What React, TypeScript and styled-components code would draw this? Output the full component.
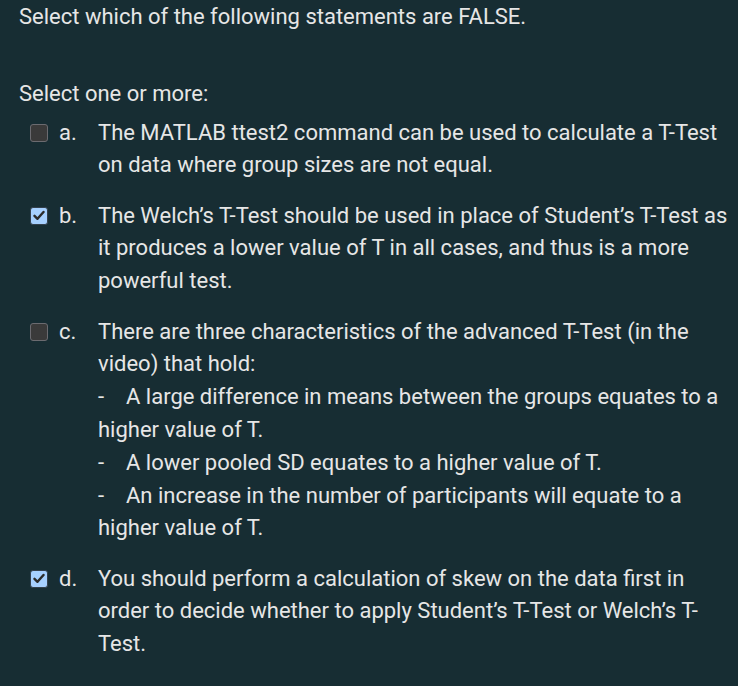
import styled, { createGlobalStyle } from "styled-components";

const GlobalStyle = createGlobalStyle`
  html, body {
    margin: 0;
    padding: 0;
    background: #172d33;
  }
  body {
    font-family: Roboto, "Liberation Sans", sans-serif;
    color: #e6e6e6;
  }
`;

const Page = styled.div`
  width: 738px;
  min-height: 686px;
  box-sizing: border-box;
  padding: 1px 4px 0 19px;
  font-size: 22px;
  line-height: 32.8px;
`;

const Prompt = styled.div`
  margin: 0 0 44px;
`;

const Hint = styled.div`
  margin-bottom: 6px;
`;

const Options = styled.div`
  display: flex;
  flex-direction: column;
  gap: 17.5px;
`;

const Option = styled.label`
  display: flex;
  align-items: flex-start;
`;

const Box = styled.span<{ checked: boolean }>`
  flex: none;
  width: 18px;
  height: 18px;
  box-sizing: border-box;
  margin: 7px 0 0 11px;
  border-radius: 3px;
  border: 1.5px solid ${({ checked }) => (checked ? "#34404c" : "#6b6b70")};
  background: ${({ checked }) => (checked ? "#a6d0ff" : "#3a3a3a")};
  display: flex;
  align-items: center;
  justify-content: center;
`;

const Letter = styled.span`
  flex: none;
  width: 39px;
  margin-left: 11px;
`;

const Body = styled.div`
  flex: 1;
`;

const SubPoint = styled.div`
  &::before {
    content: "-";
    display: inline-block;
    width: 28px;
  }
`;

type Item = { letter: string; checked: boolean; lines: React.ReactNode };

const items: Item[] = [
  {
    letter: "a.",
    checked: false,
    lines:
      "The MATLAB ttest2 command can be used to calculate a T-Test on data where group sizes are not equal.",
  },
  {
    letter: "b.",
    checked: true,
    lines:
      "The Welch\u2019s T-Test should be used in place of Student\u2019s T-Test as it produces a lower value of T in all cases, and thus is a more powerful test.",
  },
  {
    letter: "c.",
    checked: false,
    lines: (
      <>
        There are three characteristics of the advanced T-Test (in the video) that hold:
        <SubPoint>A large difference in means between the groups equates to a higher value of T.</SubPoint>
        <SubPoint>A lower pooled SD equates to a higher value of T.</SubPoint>
        <SubPoint>An increase in the number of participants will equate to a higher value of T.</SubPoint>
      </>
    ),
  },
  {
    letter: "d.",
    checked: true,
    lines:
      "You should perform a calculation of skew on the data first in order to decide whether to apply Student\u2019s T-Test or Welch\u2019s T-Test.",
  },
];

function Check({ checked }: { checked: boolean }) {
  return (
    <Box checked={checked}>
      {checked && (
        <svg width="12" height="11" viewBox="0 0 12 11">
          <path d="M1.5 5.8 L4.5 8.8 L10.5 2" fill="none" stroke="#2b2b2b" strokeWidth="2.4" strokeLinecap="round" strokeLinejoin="round" />
        </svg>
      )}
    </Box>
  );
}

export default function App() {
  return (
    <Page>
      <GlobalStyle />
      <Prompt>Select which of the following statements are FALSE.</Prompt>
      <Hint>Select one or more:</Hint>
      <Options>
        {items.map(it => (
          <Option key={it.letter}>
            <Check checked={it.checked} />
            <Letter>{it.letter}</Letter>
            <Body>{it.lines}</Body>
          </Option>
        ))}
      </Options>
    </Page>
  );
}
